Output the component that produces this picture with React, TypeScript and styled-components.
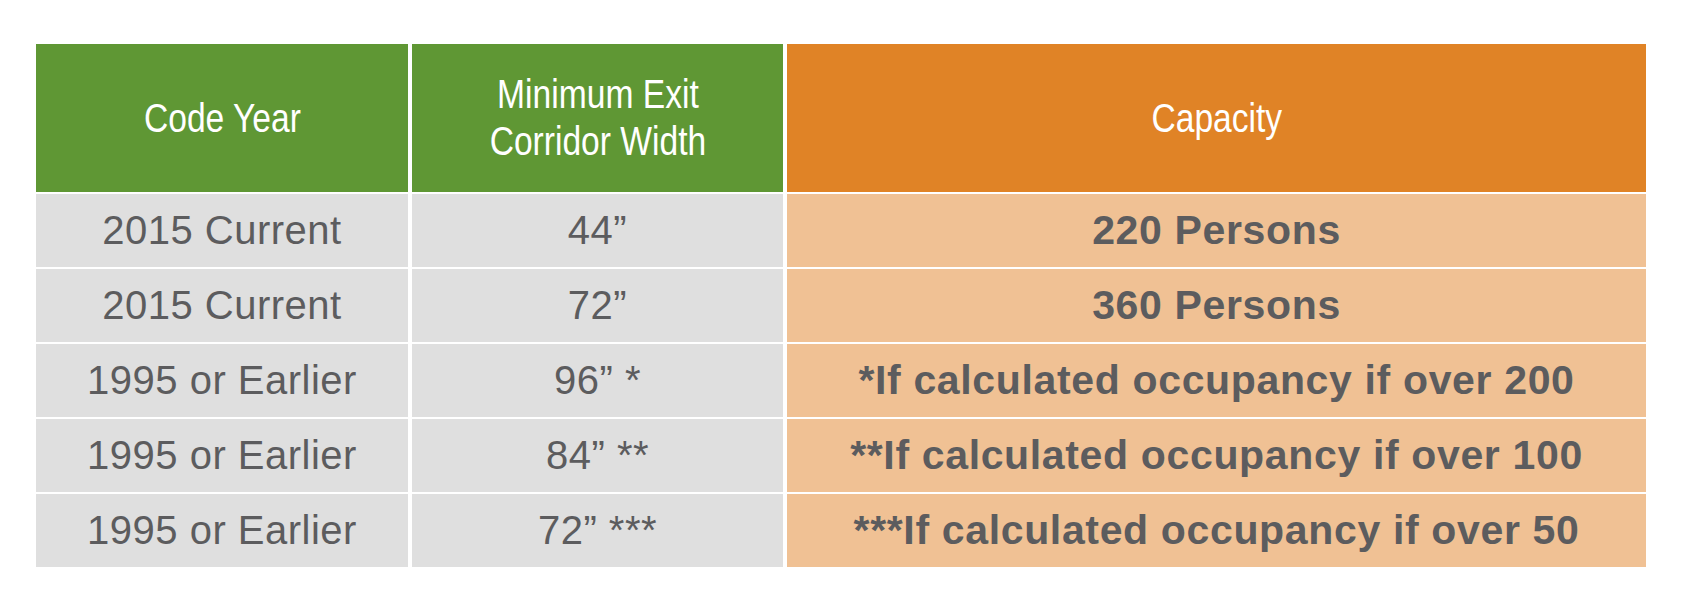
import React from 'react';
import styled, { createGlobalStyle } from 'styled-components';

// 行数据
type Row = {
  year: string;
  width: string;
  capacity: string;
};

const rows: Row[] = [
  { year: '2015 Current', width: '44”', capacity: '220 Persons' },
  { year: '2015 Current', width: '72”', capacity: '360 Persons' },
  { year: '1995 or Earlier', width: '96” *', capacity: '*If calculated occupancy if over 200' },
  { year: '1995 or Earlier', width: '84” **', capacity: '**If calculated occupancy if over 100' },
  { year: '1995 or Earlier', width: '72” ***', capacity: '***If calculated occupancy if over 50' },
];

const GlobalStyle = createGlobalStyle`
  html, body {
    margin: 0;
    padding: 0;
    background: #ffffff;
  }
  body {
    font-family: "Liberation Sans", Arial, sans-serif;
  }
`;

const Page = styled.div`
  width: 1683px;
  height: 608px;
  padding: 44px 0 0 36px;
  box-sizing: border-box;
`;

const Grid = styled.div`
  display: grid;
  width: 1610px;
  grid-template-columns: 372px 371px 1fr;
  grid-template-rows: 148px repeat(5, 73px);
  column-gap: 4px;
  row-gap: 2px;
`;

const HeadCell = styled.div<{ $tone: 'green' | 'orange' }>`
  display: flex;
  align-items: center;
  justify-content: center;
  text-align: center;
  background: ${(p) => (p.$tone === 'green' ? '#5f9734' : '#e08326')};
  color: #ffffff;
`;

// 表头字体为窄体，没有安装窄体时用横向压缩
const HeadText = styled.span`
  display: inline-block;
  font-family: "Liberation Sans", Arial, sans-serif;
  font-size: 40px;
  line-height: 47px;
  white-space: nowrap;
  transform: scaleX(0.84);
`;

const BodyCell = styled.div<{ $tone: 'grey' | 'peach'; $bold?: boolean }>`
  display: flex;
  align-items: center;
  justify-content: center;
  text-align: center;
  white-space: nowrap;
  background: ${(p) => (p.$tone === 'grey' ? '#dfdfdf' : '#f0c194')};
  color: #5c5c5e;
  font-family: "Liberation Sans", Arial, sans-serif;
  font-size: ${(p) => (p.$bold ? '41px' : '40px')};
  font-weight: ${(p) => (p.$bold ? 700 : 400)};
  letter-spacing: ${(p) => (p.$bold ? '0.65px' : '0.5px')};
`;

const App = () => {
  return (
    <Page>
      <GlobalStyle />
      <Grid>
        <HeadCell $tone="green">
          <HeadText>Code Year</HeadText>
        </HeadCell>
        <HeadCell $tone="green">
          <HeadText>
            Minimum Exit
            <br />
            Corridor Width
          </HeadText>
        </HeadCell>
        <HeadCell $tone="orange">
          <HeadText>Capacity</HeadText>
        </HeadCell>
        {rows.map((row, i) => (
          <React.Fragment key={i}>
            <BodyCell $tone="grey">{row.year}</BodyCell>
            <BodyCell $tone="grey">{row.width}</BodyCell>
            <BodyCell $tone="peach" $bold>
              {row.capacity}
            </BodyCell>
          </React.Fragment>
        ))}
      </Grid>
    </Page>
  );
};

export default App;
